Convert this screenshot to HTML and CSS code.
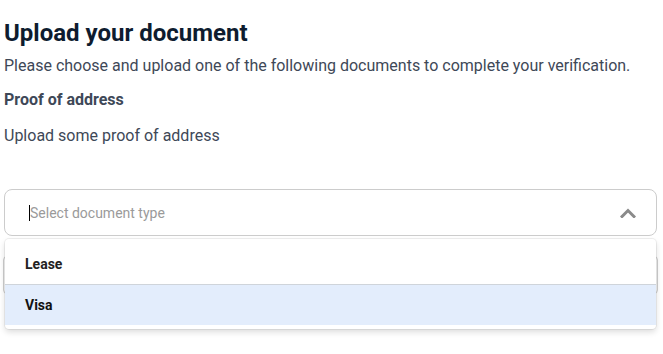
FILE: index.html
```html
<!DOCTYPE html>
<html>
<head>
<meta charset="utf-8">
<link rel="stylesheet" href="styles.css">
</head>
<body>
<div class="page">
  <h1 class="title">Upload your document</h1>
  <p class="lead">Please choose and upload one of the following documents to complete your verification.</p>
  <h3 class="label">Proof of address</h3>
  <p class="desc">Upload some proof of address</p>
  <div class="select">
    <div class="control">
      <span class="caret"></span><span class="placeholder">Select document type</span>
      <svg class="chevron" width="16" height="10" viewBox="0 0 16 10"><path d="M2 8.5 L8 2.5 L14 8.5" fill="none" stroke="#8a8a8a" stroke-width="3" stroke-linecap="square"/></svg>
    </div>
    <div class="menu">
      <div class="option first">Lease</div>
      <div class="option active">Visa</div>
    </div>
  </div>
  <div class="behind"></div>
</div>
</body>
</html>
```
FILE: styles.css
```css
html, body { margin: 0; padding: 0; background: #fff; }
body { font-family: Roboto, "Noto Sans", sans-serif; min-height: 354px; }
.page { padding: 0 6px 0 4px; }
.title { margin: 18px 0 0; font-size: 24px; line-height: 30px; font-weight: 700; color: #0e1c2f; }
.lead { margin: 6px 0 0; font-size: 16px; line-height: 24px; color: #3e4857; }
.label { margin: 11px 0 0; font-size: 16px; line-height: 22px; font-weight: 700; color: #3e4857; }
.desc { margin: 13px 0 0; font-size: 16px; line-height: 24px; color: #3e4857; }
.select { position: relative; margin-top: 41px; }
.control { height: 45px; border: 1px solid #cccccc; border-radius: 8px; display: flex; align-items: center; padding: 0 20px 0 24px; }
.caret { width: 1px; height: 16px; background: #000; margin-right: 0; }
.placeholder { flex: 1; font-size: 14px; color: #9a9a9a; }
.chevron { display: block; margin-right: 0; }
.menu { position: absolute; top: 50px; left: 1px; right: 1px; background: #fff; border-radius: 4px; box-shadow: 0 0 0 1px rgba(0,0,0,0.06), 0 3px 6px rgba(0,0,0,0.14); padding-bottom: 4px; z-index: 2; }
.option { height: 44px; display: flex; align-items: center; padding-left: 20px; font-size: 14px; font-weight: 700; color: #222; }
.option.first { padding-top: 5px; height: 40px; }
.option.active { height: 40px; background: #e3edfc; border-top: 1px solid #cfd4da; color: #111; }
.behind { margin: 20px -1px 0 -1px; height: 36px; border: 1px solid #cccccc; border-radius: 4px; }
```
